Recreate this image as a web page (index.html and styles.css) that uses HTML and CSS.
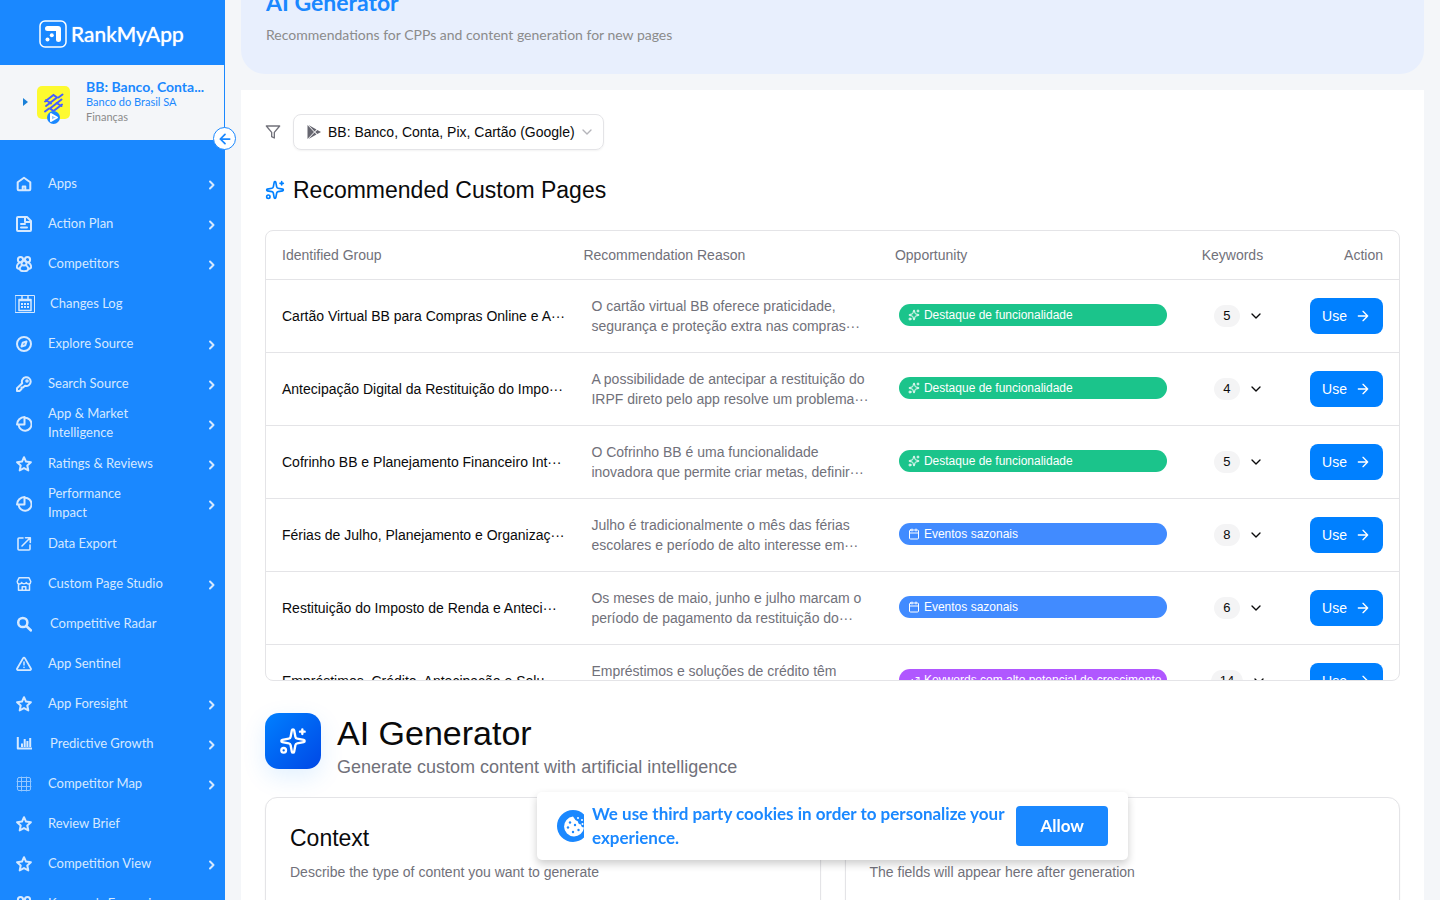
FILE: index.html
```html
<!DOCTYPE html>
<html lang="en">
<head>
<meta charset="utf-8">
<meta name="viewport" content="width=device-width, initial-scale=1">
<title>RankMyApp - AI Generator</title>
<link rel="stylesheet" href="styles.css">
</head>
<body>
<svg class="sprite" aria-hidden="true">
  <symbol id="home" viewBox="0 0 16 16"><path d="M1.700 6.200 8 1.800l6.300 4.400v7.100a1 1 0 0 1-1 1H2.700a1 1 0 0 1-1-1z"/><path d="M6.700 14v-3.500h2.600V14"/></symbol>
  <symbol id="plan" viewBox="0 0 16 16"><path d="M1 2a1 1 0 0 1 1-1h9l4 4v9a1 1 0 0 1-1 1H2a1 1 0 0 1-1-1zM9 1v5h6M5 8h4M5 11.500h6"/></symbol>
  <symbol id="people" viewBox="0 0 16 16"><circle cx="4.500" cy="3.700" r="2.600"/><circle cx="11.500" cy="3.700" r="2.600"/><circle cx="8" cy="7" r="2.600"/><path d="M3 7C.8 8.500.2 11.500 1.800 12.300c1 .6 1.800.2 2.300-.6M13 7c2.200 1.500 2.800 4.500 1.200 5.300-1 .6-1.800.2-2.300-.6M5.800 9.500C4 10.500 3 13.200 4.600 14.400c1.600 1.100 5.200 1.100 6.800 0 1.600-1.200.6-3.900-1.200-4.900"/></symbol>
  <symbol id="calendar-grid" viewBox="0 0 20 18"><path stroke-width="1" d="M.5.500h19v17H.5z"/><path stroke-width="1.500" d="M4 4.500h12v11H4zM4 5.500h12M7 1.500V4m6-2.500V4"/><path stroke-linecap="butt" stroke-width="2" stroke-dasharray="2 1" d="M6 9h8M6 12h8"/></symbol>
  <symbol id="compass" viewBox="0 0 16 16"><circle cx="8" cy="8" r="7"/><path d="m10.500 5.500-1.200 3.800-3.800 1.200 1.200-3.800z"/></symbol>
  <symbol id="key" viewBox="0 0 16 16"><path d="M6.200 7.200A4.400 4.400 0 1 1 9 9.800l-2 1.700H5.500V13l-2 2H1v-2.700z"/><circle cx="11" cy="5" r=".8"/></symbol>
  <symbol id="pie" viewBox="0 0 16 16"><path d="M9 1.700A6.500 6.500 0 1 1 2.600 9"/><path d="M8.500 1C4.500 1 1 4.500 1 8.500h7.500z"/></symbol>
  <symbol id="star" viewBox="0 0 16 16"><path d="m8 1.200 2 4.400 4.900.6-3.600 3.300 1 4.900L8 12.100l-4.300 2.300 1-4.900L1.100 6.200 6 5.600z"/></symbol>
  <symbol id="export" viewBox="0 0 16 16"><path stroke-width="1.600" d="M7 2H3a1 1 0 0 0-1 1v10a1 1 0 0 0 1 1h10a1 1 0 0 0 1-1V9M9.500 1.700H14.300V6.500M14 2 6 10"/></symbol>
  <symbol id="shop" viewBox="0 0 16 16"><path stroke-width="1.500" d="M2.500 8v6.200h11V8M1.200 5.500 3 1.800h10l1.800 3.700c0 3-3.400 3.200-4.500 1C9.500 8.300 6.500 8.300 5.700 6.500c-1.100 2.200-4.500 2-4.500-1zM6.200 14v-3.200h3.600V14"/></symbol>
  <symbol id="search" viewBox="0 0 16 16"><g stroke-width="2.500"><circle cx="6.800" cy="6.500" r="4.600"/><path d="m10.300 10 4.700 4.500"/></g></symbol>
  <symbol id="warn" viewBox="0 0 16 16"><path stroke-width="1.700" d="M7.100 2.200a1 1 0 0 1 1.800 0l6.100 10.500a1 1 0 0 1-.9 1.400H1.900A1 1 0 0 1 1 12.700z"/><path stroke-width="1.500" d="M8 6v3M8 11.300v.2"/></symbol>
  <symbol id="bars" viewBox="0 0 16 16"><g stroke-linecap="butt"><path d="M1.800 1v11.500H16"/><path d="M6 7.500V11m2.700-8v8m2.700-6v6M14.200 2v9"/></g></symbol>
  <symbol id="grid" viewBox="0 0 16 16"><g stroke-width="1" opacity=".65"><rect x="1.500" y="1.500" width="13" height="13" rx="1.500"/><path d="M5.500 1v14M10.500 1v14M1 5.500h14M1 10.500h14"/></g></symbol>
  <symbol id="chev-r" viewBox="0 0 16 16"><path d="m6 4.500 3.500 3.500L6 11.500"/></symbol>
  <symbol id="chev-d" viewBox="0 0 24 24"><path d="m6 9 6 6 6-6"/></symbol>
  <symbol id="arrow" viewBox="0 0 24 24"><path d="M5 12h14M12 5l7 7-7 7"/></symbol>
  <symbol id="arrow-l" viewBox="0 0 24 24"><path d="M20 12H4m8-8-8 8 8 8"/></symbol>
  <symbol id="spark" viewBox="0 0 24 24"><path d="M11.020 2.800a1 1 0 0 1 1.960 0l1.050 5.560a2 2 0 0 0 1.600 1.600l5.560 1.050a1 1 0 0 1 0 1.960l-5.560 1.050a2 2 0 0 0-1.600 1.600l-1.050 5.560a1 1 0 0 1-1.960 0l-1.050-5.560a2 2 0 0 0-1.600-1.600l-5.560-1.050a1 1 0 0 1 0-1.960l5.560-1.050a2 2 0 0 0 1.600-1.600zM20 2v4M22 4h-4"/><circle cx="4" cy="20" r="2"/></symbol>
  <symbol id="event" viewBox="0 0 24 24"><rect x="3" y="4" width="18" height="18" rx="2"/><path d="M8 2v4m8-4v4M3 10h18"/></symbol>
  <symbol id="trend" viewBox="0 0 24 24"><path d="M16 7h6v6M22 7l-8.500 8.500-5-5L2 17"/></symbol>
  <symbol id="funnel" viewBox="0 0 24 24"><path d="M22 3H2l8 9.460V19l4 2v-8.540z"/></symbol>
</svg>

<div class="app">
  <aside class="sidebar">
    <a class="brand" href="#">
      <svg class="brand-mark" viewBox="0 0 28 28" aria-hidden="true"><rect x="1" y="1" width="26" height="26" rx="5" fill="none" stroke="#fff" stroke-width="1.500"/><path d="M8.500 6H19q3 0 3 3v11q0 2-2.500 2T17 20v-9H8.500Q6 11 6 8.500T8.500 6z" fill="#fff"/><circle cx="12.800" cy="15.200" r="2" fill="#fff"/><circle cx="8.500" cy="19.500" r="2" fill="#fff"/></svg>
      <span>RankMyApp</span>
    </a>
    <section class="account">
      <span class="caret"></span>
      <svg class="app-icon" viewBox="0 0 34 40" aria-hidden="true"><rect width="33" height="33" rx="5" fill="#fdfa30"/><g fill="none" stroke="#465eff" stroke-width="2" stroke-linejoin="miter"><path d="M8 15.500 16.500 9l3.500 2.500-11 8.500M25 18.500 16.500 25 13 22.500l11.500-9M8 25.500l4-3M25.500 8.500l-4 3M9 14l5 3.500M19.500 17l5 3"/></g><circle cx="16.500" cy="31.500" r="6.500" fill="#1a88ff"/><path d="m14 28 6 3.500-6 3.500z" fill="#8ec5ff" stroke="#fff"/></svg>
      <div class="account-text">
        <strong>BB: Banco, Conta...</strong>
        <span class="company">Banco do Brasil SA</span>
        <span class="category">Finanças</span>
      </div>
      <button class="collapse" type="button" aria-label="Collapse menu"><svg><use href="#arrow-l"/></svg></button>
    </section>
    <nav class="menu">
      <a href="#"><svg><use href="#home"/></svg><span>Apps</span><svg class="more"><use href="#chev-r"/></svg></a>
      <a href="#"><svg><use href="#plan"/></svg><span>Action Plan</span><svg class="more"><use href="#chev-r"/></svg></a>
      <a href="#"><svg><use href="#people"/></svg><span>Competitors</span><svg class="more"><use href="#chev-r"/></svg></a>
      <a href="#" class="wide"><svg><use href="#calendar-grid"/></svg><span>Changes Log</span></a>
      <a href="#"><svg><use href="#compass"/></svg><span>Explore Source</span><svg class="more"><use href="#chev-r"/></svg></a>
      <a href="#"><svg><use href="#key"/></svg><span>Search Source</span><svg class="more"><use href="#chev-r"/></svg></a>
      <a href="#"><svg><use href="#pie"/></svg><span>App &amp; Market<br>Intelligence</span><svg class="more"><use href="#chev-r"/></svg></a>
      <a href="#"><svg><use href="#star"/></svg><span>Ratings &amp; Reviews</span><svg class="more"><use href="#chev-r"/></svg></a>
      <a href="#"><svg><use href="#pie"/></svg><span>Performance<br>Impact</span><svg class="more"><use href="#chev-r"/></svg></a>
      <a href="#"><svg><use href="#export"/></svg><span>Data Export</span></a>
      <a href="#"><svg><use href="#shop"/></svg><span>Custom Page Studio</span><svg class="more"><use href="#chev-r"/></svg></a>
      <a href="#" class="loose"><svg><use href="#search"/></svg><span>Competitive Radar</span></a>
      <a href="#"><svg><use href="#warn"/></svg><span>App Sentinel</span></a>
      <a href="#"><svg><use href="#star"/></svg><span>App Foresight</span><svg class="more"><use href="#chev-r"/></svg></a>
      <a href="#" class="loose"><svg><use href="#bars"/></svg><span>Predictive Growth</span><svg class="more"><use href="#chev-r"/></svg></a>
      <a href="#"><svg><use href="#grid"/></svg><span>Competitor Map</span><svg class="more"><use href="#chev-r"/></svg></a>
      <a href="#"><svg><use href="#star"/></svg><span>Review Brief</span></a>
      <a href="#"><svg><use href="#star"/></svg><span>Competition View</span><svg class="more"><use href="#chev-r"/></svg></a>
      <a href="#"><svg><use href="#people"/></svg><span>Keywords Expansion</span></a>
    </nav>
  </aside>

  <main class="main">
    <header class="banner">
      <h1>AI Generator</h1>
      <p>Recommendations for CPPs and content generation for new pages</p>
    </header>
    <div class="panel">
      <div class="filters">
        <svg class="funnel" aria-hidden="true"><use href="#funnel"/></svg>
        <div class="picker">
          <svg class="play" viewBox="0 0 16 16" aria-hidden="true"><path d="M1.500 1v14L8 8z" fill="#65656f"/><path d="m2.500 1 8 4.500L8.500 7.500zM2.500 15l8-4.500-2-2zM11.300 6l3.700 2-3.700 2L9.200 8z" fill="#65656f"/></svg>
          <select aria-label="App"><option>BB: Banco, Conta, Pix, Cartão (Google)</option></select>
          <svg class="picker-arrow" aria-hidden="true"><use href="#chev-d"/></svg>
        </div>
      </div>

      <h2 class="section-title"><svg aria-hidden="true"><use href="#spark"/></svg>Recommended Custom Pages</h2>

      <div class="table-box">
        <table>
          <thead><tr><th class="c-group">Identified Group</th><th class="c-reason">Recommendation Reason</th><th class="c-opp">Opportunity</th><th class="c-key">Keywords</th><th class="c-act">Action</th></tr></thead>
          <tbody>
            <tr><td class="group">Cartão Virtual BB para Compras Online e A···</td><td class="reason">O cartão virtual BB oferece praticidade,<br>segurança e proteção extra nas compras···</td><td class="opp"><span class="tag green"><svg><use href="#spark"/></svg>Destaque de funcionalidade</span></td><td class="key"><div><span class="count">5</span><button class="expand" type="button" aria-label="Show keywords"><svg><use href="#chev-d"/></svg></button></div></td><td class="act"><button class="use" type="button">Use<svg><use href="#arrow"/></svg></button></td></tr>
            <tr><td class="group">Antecipação Digital da Restituição do Impo···</td><td class="reason">A possibilidade de antecipar a restituição do<br>IRPF direto pelo app resolve um problema···</td><td class="opp"><span class="tag green"><svg><use href="#spark"/></svg>Destaque de funcionalidade</span></td><td class="key"><div><span class="count">4</span><button class="expand" type="button" aria-label="Show keywords"><svg><use href="#chev-d"/></svg></button></div></td><td class="act"><button class="use" type="button">Use<svg><use href="#arrow"/></svg></button></td></tr>
            <tr><td class="group">Cofrinho BB e Planejamento Financeiro Int···</td><td class="reason">O Cofrinho BB é uma funcionalidade<br>inovadora que permite criar metas, definir···</td><td class="opp"><span class="tag green"><svg><use href="#spark"/></svg>Destaque de funcionalidade</span></td><td class="key"><div><span class="count">5</span><button class="expand" type="button" aria-label="Show keywords"><svg><use href="#chev-d"/></svg></button></div></td><td class="act"><button class="use" type="button">Use<svg><use href="#arrow"/></svg></button></td></tr>
            <tr><td class="group">Férias de Julho, Planejamento e Organizaç···</td><td class="reason">Julho é tradicionalmente o mês das férias<br>escolares e período de alto interesse em···</td><td class="opp"><span class="tag blue"><svg><use href="#event"/></svg>Eventos sazonais</span></td><td class="key"><div><span class="count">8</span><button class="expand" type="button" aria-label="Show keywords"><svg><use href="#chev-d"/></svg></button></div></td><td class="act"><button class="use" type="button">Use<svg><use href="#arrow"/></svg></button></td></tr>
            <tr><td class="group">Restituição do Imposto de Renda e Anteci···</td><td class="reason">Os meses de maio, junho e julho marcam o<br>período de pagamento da restituição do···</td><td class="opp"><span class="tag blue"><svg><use href="#event"/></svg>Eventos sazonais</span></td><td class="key"><div><span class="count">6</span><button class="expand" type="button" aria-label="Show keywords"><svg><use href="#chev-d"/></svg></button></div></td><td class="act"><button class="use" type="button">Use<svg><use href="#arrow"/></svg></button></td></tr>
            <tr><td class="group">Empréstimos, Crédito, Antecipação e Solu···</td><td class="reason">Empréstimos e soluções de crédito têm<br>&nbsp;</td><td class="opp"><span class="tag purple"><svg><use href="#trend"/></svg>Keywords com alto potencial de crescimento</span></td><td class="key"><div><span class="count">14</span><button class="expand" type="button" aria-label="Show keywords"><svg><use href="#chev-d"/></svg></button></div></td><td class="act"><button class="use" type="button">Use<svg><use href="#arrow"/></svg></button></td></tr>
          </tbody>
        </table>
      </div>

      <div class="generator">
        <span class="generator-icon"><svg aria-hidden="true"><use href="#spark"/></svg></span>
        <div><h2>AI Generator</h2><p>Generate custom content with artificial intelligence</p></div>
      </div>

      <div class="cards">
        <section class="card"><h3>Context</h3><p>Describe the type of content you want to generate</p></section>
        <section class="card"><h3></h3><p>The fields will appear here after generation</p></section>
      </div>
    </div>
  </main>
</div>

<div class="cookie-layer">
  <div class="cookie" role="dialog" aria-label="Cookies">
    <svg class="cookie-icon" viewBox="0 0 27 32" aria-hidden="true"><circle cx="16" cy="16" r="16" fill="#1a88ff"/><path d="M16 6.500a10 10 0 1 0 11 11q-3 0-3-3-3 0-3-3-3-1-5-5z" fill="#fff"/><g fill="#1a88ff"><circle cx="13" cy="12.500" r="1.200"/><circle cx="18" cy="15" r="1.200"/><circle cx="11" cy="17.500" r="1.200"/><circle cx="16" cy="22" r="1.200"/><circle cx="21.500" cy="20" r="1.200"/></g><g fill="#fff"><circle cx="21" cy="8" r="1"/><circle cx="25" cy="10" r="1"/><circle cx="25.500" cy="14" r="1"/></g></svg>
    <p>We use third party cookies in order to personalize your experience.</p>
    <button type="button">Allow</button>
  </div>
</div>
</body>
</html>
```

FILE: styles.css
```css
* { box-sizing: border-box; }
body { margin: 0; background: #f4f6f9; color: #0a0a0b; font: 14px/20px "Liberation Sans", Arial, sans-serif; }
h1, h2, h3, p { margin: 0; font-weight: 400; }
a { color: inherit; text-decoration: none; }
button, select { font: inherit; color: inherit; border: 0; margin: 0; }
svg { width: 16px; height: 16px; flex: none; fill: none; stroke: currentColor; stroke-width: 2; stroke-linecap: round; stroke-linejoin: round; }
.sprite { display: none; }

.app { display: flex; height: 100vh; overflow: hidden; }

.sidebar { flex: none; width: 225px; background: #1a88ff; color: #fff; font-family: Lato, "Noto Sans", sans-serif; }
.brand { display: flex; align-items: center; gap: 4px; height: 65px; padding: 2px 0 0 39px; font-size: 21px; line-height: 32px; text-shadow: 0 0 1px #fff; }
.brand-mark { width: 28px; height: 28px; stroke: none; }
.account { position: relative; display: flex; align-items: flex-start; height: 75px; margin-right: 1px; padding: 14px 0 0 23px; background: #f4f6f9; color: #1a88ff; }
.caret { margin: 19px 9px 0 0; border: 4px solid transparent; border-left: 5px solid #1a80d8; border-right: 0; }
.app-icon { width: 34px; height: 40px; margin-top: 7px; stroke: none; }
.account-text { display: flex; flex-direction: column; margin-left: 15px; font-size: 11px; line-height: 15px; white-space: nowrap; }
.account-text strong { font-size: 14px; line-height: 15px; }
.category { color: #8b8b8b; }
.collapse { position: absolute; right: -12px; bottom: -10px; display: grid; place-items: center; width: 23px; height: 23px; padding: 0; border: 1px solid #1a88ff; border-radius: 50%; background: #fff; color: #1a88ff; }
.collapse svg { width: 14px; height: 14px; stroke-width: 3; }

.menu { padding-top: 24px; }
.menu a { display: flex; align-items: center; height: 40px; padding: 0 5px 0 16px; gap: 16px; color: #d6e9ff; font-size: 13px; line-height: 19px; }
.menu span { flex: 1; max-width: 125px; padding-bottom: 2px; }
.menu svg { stroke-width: 2; }
.menu .more { margin-left: auto; margin-top: 1px; }
.menu .wide { padding-left: 15px; gap: 15px; }
.menu .wide svg { width: 20px; height: 18px; }
.menu .loose { gap: 18px; }

.main { flex: 1; min-width: 0; padding: 0 16px; }
.banner { margin-top: -38px; padding: 24px 25px 28px; border-radius: 24px; background: #e8effd; font-family: Lato, "Noto Sans", sans-serif; }
.banner h1 { color: #1a88ff; font-size: 23px; line-height: 32px; font-weight: 700; }
.banner p { margin-top: 6px; color: #8b8b8b; font-size: 14px; line-height: 22px; }
.panel { margin-top: 16px; padding: 24px; background: #fff; }

.filters { display: flex; align-items: center; gap: 12px; }
.funnel { color: #71717a; }
.picker { display: grid; align-items: center; border: 1px solid #e4e4e7; border-radius: 8px; box-shadow: 0 1px 2px rgba(0, 0, 0, .05); }
.picker > * { grid-area: 1 / 1; }
.play { margin-left: 12px; stroke: none; }
.picker select { height: 34px; padding: 0 28px 0 34px; appearance: none; background: transparent; border-radius: 8px; }
.picker-arrow { justify-self: end; margin-right: 8px; color: #b4b4ba; pointer-events: none; }

.section-title { display: flex; align-items: center; gap: 8px; margin-top: 24px; font-size: 23px; line-height: 32px; }
.section-title svg { width: 20px; height: 20px; color: #0080ff; }

.table-box { margin-top: 24px; height: 451px; border: 1px solid #e4e4e7; border-radius: 8px; overflow: hidden; }
table { width: 100%; table-layout: fixed; border-collapse: separate; border-spacing: 0; }
th, td { padding: 0 16px 1px; border-bottom: 1px solid #e4e4e7; text-align: left; font-weight: 400; white-space: nowrap; }
th { height: 49px; color: #71717a; }
td { height: 73px; }
.c-group { width: 26.6%; }
.c-reason { width: 27.5%; }
.c-opp { width: 26.8%; }
.c-key { width: 8.8%; text-align: center; }
.c-act { text-align: right; }
.reason { padding-left: 24px; padding-right: 8px; color: #71717a; }
.opp { padding: 0 16px 2px 20px; }
.tag { display: flex; align-items: center; gap: 4px; padding: 0 9px; border-radius: 11px; color: #fff; font-size: 12px; line-height: 22px; }
.tag svg { width: 12px; height: 12px; }
.green { background: #1bc48b; }
.blue { background: #418bff; }
.purple { background: #b057ff; }
.key { padding: 0 0 0 13px; }
.key div { display: flex; align-items: center; justify-content: center; gap: 8px; }
.count { padding: 0 9px; border-radius: 11px; background: #f4f4f5; font-size: 13px; line-height: 22px; }
.expand { display: grid; padding: 0; background: none; }
.act { padding-bottom: 0; text-align: right; }
.use { display: inline-flex; align-items: center; gap: 8px; height: 36px; padding: 0 12px; border-radius: 8px; background: #0080ff; color: #fff; }

.generator { display: flex; gap: 16px; margin-top: 32px; }
.generator-icon { display: grid; place-items: center; width: 56px; height: 56px; border-radius: 14px; background: linear-gradient(135deg, #0080ff, #0048e6); color: #fff; box-shadow: 0 8px 24px rgba(0, 128, 255, .12); }
.generator-icon svg { width: 28px; height: 28px; }
.generator h2 { font-size: 34px; line-height: 40px; }
.generator p { color: #71717a; font-size: 18px; line-height: 28px; }

.cards { display: grid; grid-template-columns: 1fr 1fr; gap: 24px; margin-top: 16px; }
.card { min-height: 320px; padding: 24px; border: 1px solid #e4e4e7; border-radius: 12px; background: #fff; box-shadow: 0 1px 2px rgba(0, 0, 0, .05); }
.card h3 { min-height: 32px; font-size: 23px; line-height: 32px; }
.card p { margin-top: 8px; color: #71717a; }

.cookie-layer { position: fixed; left: 225px; right: 0; bottom: 40px; display: flex; justify-content: center; pointer-events: none; }
.cookie { display: flex; align-items: center; width: 591px; max-width: 90%; padding: 10px 20px; border-radius: 5px; background: #fff; box-shadow: 0 4px 8px rgba(0, 0, 0, .2); font-family: Lato, "Noto Sans", sans-serif; font-weight: 700; pointer-events: auto; }
.cookie-icon { width: 27px; height: 32px; margin-right: 8px; stroke: none; }
.cookie p { flex: 1; color: #1a88ff; font-size: 17px; line-height: 24px; font-weight: 700; }
.cookie button { height: 40px; padding: 0 24px; border-radius: 4px; background: #1a88ff; color: #fff; font-size: 17px; }
```
